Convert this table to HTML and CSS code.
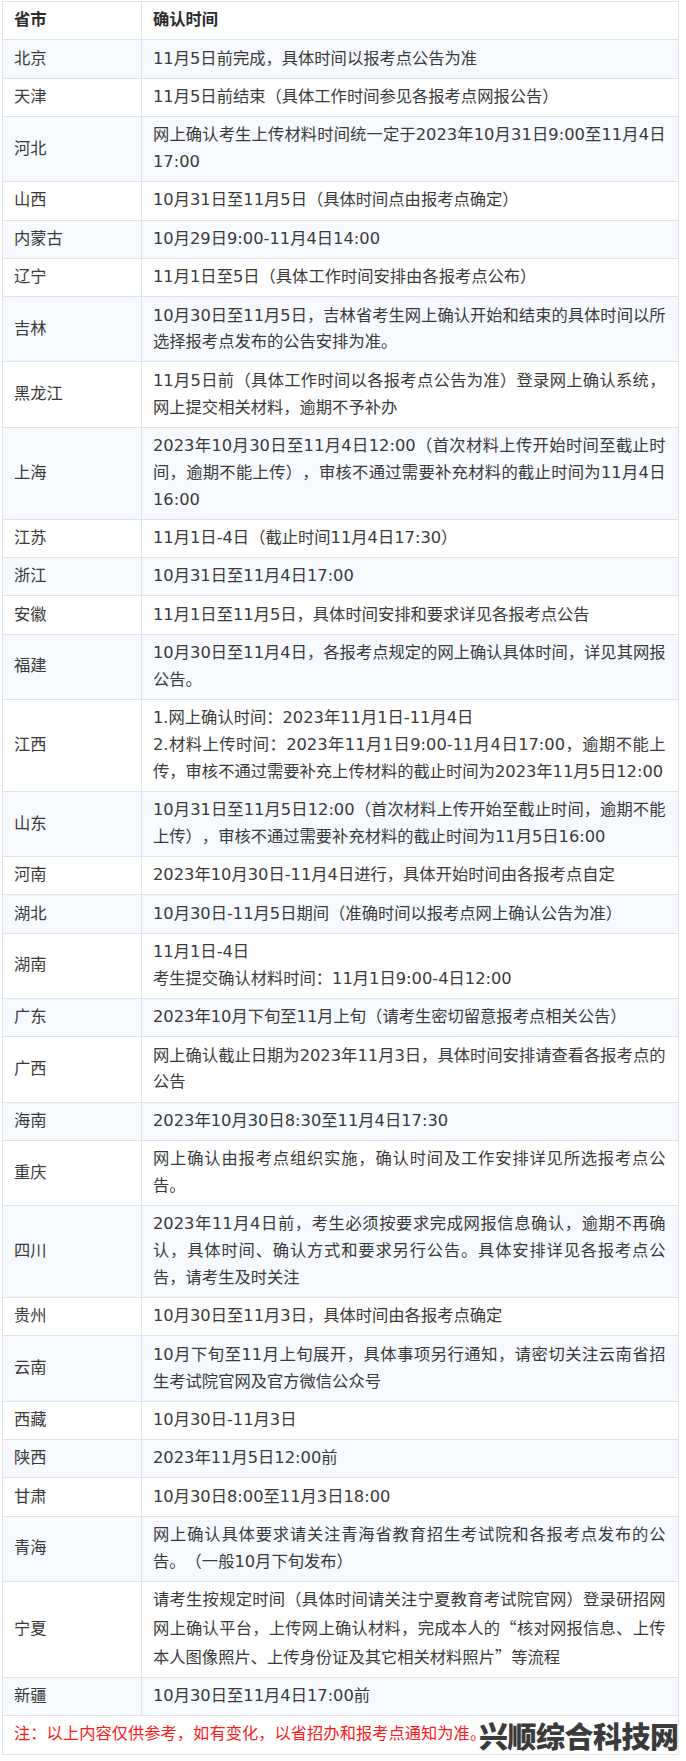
FILE: index.html
```html
<!DOCTYPE html>
<html lang="zh-CN">
<head>
<meta charset="utf-8">
<title>各省市网上确认时间</title>
<link rel="stylesheet" href="styles.css">
</head>
<body>
<div class="wrap">
<table class="sched">
<colgroup><col class="c-prov"><col class="c-time"></colgroup>
<thead>
<tr><th class="prov">省市</th><th class="time">确认时间</th></tr>
</thead>
<tbody>
<tr><td class="prov">北京</td><td class="time">11月5日前完成，具体时间以报考点公告为准</td></tr>
<tr><td class="prov">天津</td><td class="time">11月5日前结束（具体工作时间参见各报考点网报公告）</td></tr>
<tr><td class="prov">河北</td><td class="time">网上确认考生上传材料时间统一定于2023年10月31日9:00至11月4日17:00</td></tr>
<tr><td class="prov">山西</td><td class="time">10月31日至11月5日（具体时间点由报考点确定）</td></tr>
<tr><td class="prov">内蒙古</td><td class="time">10月29日9:00-11月4日14:00</td></tr>
<tr><td class="prov">辽宁</td><td class="time">11月1日至5日（具体工作时间安排由各报考点公布）</td></tr>
<tr><td class="prov">吉林</td><td class="time">10月30日至11月5日，吉林省考生网上确认开始和结束的具体时间以所选择报考点发布的公告安排为准。</td></tr>
<tr><td class="prov">黑龙江</td><td class="time">11月5日前（具体工作时间以各报考点公告为准）登录网上确认系统，网上提交相关材料，逾期不予补办</td></tr>
<tr><td class="prov">上海</td><td class="time">2023年10月30日至11月4日12:00（首次材料上传开始时间至截止时间，逾期不能上传），审核不通过需要补充材料的截止时间为11月4日16:00</td></tr>
<tr><td class="prov">江苏</td><td class="time">11月1日-4日（截止时间11月4日17:30）</td></tr>
<tr><td class="prov">浙江</td><td class="time">10月31日至11月4日17:00</td></tr>
<tr><td class="prov">安徽</td><td class="time">11月1日至11月5日，具体时间安排和要求详见各报考点公告</td></tr>
<tr><td class="prov">福建</td><td class="time">10月30日至11月4日，各报考点规定的网上确认具体时间，详见其网报公告。</td></tr>
<tr><td class="prov">江西</td><td class="time"><p class="para">1.网上确认时间：2023年11月1日-11月4日</p><p class="para">2.材料上传时间：2023年11月1日9:00-11月4日17:00，逾期不能上传，审核不通过需要补充上传材料的截止时间为2023年11月5日12:00</p></td></tr>
<tr><td class="prov">山东</td><td class="time">10月31日至11月5日12:00（首次材料上传开始至截止时间，逾期不能上传），审核不通过需要补充材料的截止时间为11月5日16:00</td></tr>
<tr><td class="prov">河南</td><td class="time">2023年10月30日-11月4日进行，具体开始时间由各报考点自定</td></tr>
<tr><td class="prov">湖北</td><td class="time">10月30日-11月5日期间（准确时间以报考点网上确认公告为准）</td></tr>
<tr><td class="prov">湖南</td><td class="time"><p class="para">11月1日-4日</p><p class="para">考生提交确认材料时间：11月1日9:00-4日12:00</p></td></tr>
<tr><td class="prov">广东</td><td class="time">2023年10月下旬至11月上旬（请考生密切留意报考点相关公告）</td></tr>
<tr><td class="prov">广西</td><td class="time">网上确认截止日期为2023年11月3日，具体时间安排请查看各报考点的公告</td></tr>
<tr><td class="prov">海南</td><td class="time">2023年10月30日8:30至11月4日17:30</td></tr>
<tr><td class="prov">重庆</td><td class="time">网上确认由报考点组织实施，确认时间及工作安排详见所选报考点公告。</td></tr>
<tr><td class="prov">四川</td><td class="time">2023年11月4日前，考生必须按要求完成网报信息确认，逾期不再确认，具体时间、确认方式和要求另行公告。具体安排详见各报考点公告，请考生及时关注</td></tr>
<tr><td class="prov">贵州</td><td class="time">10月30日至11月3日，具体时间由各报考点确定</td></tr>
<tr><td class="prov">云南</td><td class="time">10月下旬至11月上旬展开，具体事项另行通知，请密切关注云南省招生考试院官网及官方微信公众号</td></tr>
<tr><td class="prov">西藏</td><td class="time">10月30日-11月3日</td></tr>
<tr><td class="prov">陕西</td><td class="time">2023年11月5日12:00前</td></tr>
<tr><td class="prov">甘肃</td><td class="time">10月30日8:00至11月3日18:00</td></tr>
<tr><td class="prov">青海</td><td class="time">网上确认具体要求请关注青海省教育招生考试院和各报考点发布的公告。（一般10月下旬发布）</td></tr>
<tr><td class="prov">宁夏</td><td class="time">请考生按规定时间（具体时间请关注宁夏教育考试院官网）登录研招网网上确认平台，上传网上确认材料，完成本人的<span class="cjk">“</span>核对网报信息、上传本人图像照片、上传身份证及其它相关材料照片<span class="cjk">”</span>等流程</td></tr>
<tr><td class="prov">新疆</td><td class="time">10月30日至11月4日17:00前</td></tr>
<tr class="note-row"><td class="note" colspan="2">注：以上内容仅供参考，如有变化，以省招办和报考点通知为准。</td></tr>
</tbody>
</table>
<div class="watermark">兴顺综合科技网</div>
</div>
</body>
</html>
```

FILE: styles.css
```css
html, body {
  margin: 0;
  padding: 0;
  background: #ffffff;
}

.wrap {
  position: relative;
  padding: 1px 0 0 2px;
  width: 684px;
}

.sched {
  width: 677px;
  border-collapse: collapse;
  table-layout: fixed;
  font-family: "DejaVu Sans", "Noto Sans CJK SC", sans-serif;
  font-size: 16.3px;
  line-height: 26.85px;
  color: #3a3a3a;
  text-spacing-trim: space-all;
}

.c-prov { width: 139px; }

.sched th,
.sched td {
  border: 1px solid #dfe2e6;
  padding: 5.25px 12.5px 5.25px 11px;
  vertical-align: middle;
  text-align: left;
}

.sched th {
  font-weight: bold;
  color: #2b2b2b;
  background: #ffffff;
}

.sched td.time {
  text-align: justify;
}

.cjk {
  font-family: "Noto Sans CJK SC", sans-serif;
}

.sched tbody tr:nth-child(odd) {
  background: #f6f9fd;
}

.sched tbody tr:nth-child(even) {
  background: #ffffff;
}

.para {
  margin: 0;
}

.sched td.note {
  color: #ff1a1a;
  background: #ffffff;
}

.watermark {
  position: absolute;
  left: 479px;
  top: 1718px;
  font-family: "Noto Sans CJK SC", sans-serif;
  font-weight: 900;
  font-size: 29px;
  line-height: 34px;
  letter-spacing: -0.5px;
  color: #3b3b3b;
  text-shadow: 1px 0 0 #fff, -1px 0 0 #fff, 0 1px 0 #fff, 0 -1px 0 #fff, 1px 1px 0 #fff, -1px -1px 0 #fff, 1px -1px 0 #fff, -1px 1px 0 #fff;
}
```
